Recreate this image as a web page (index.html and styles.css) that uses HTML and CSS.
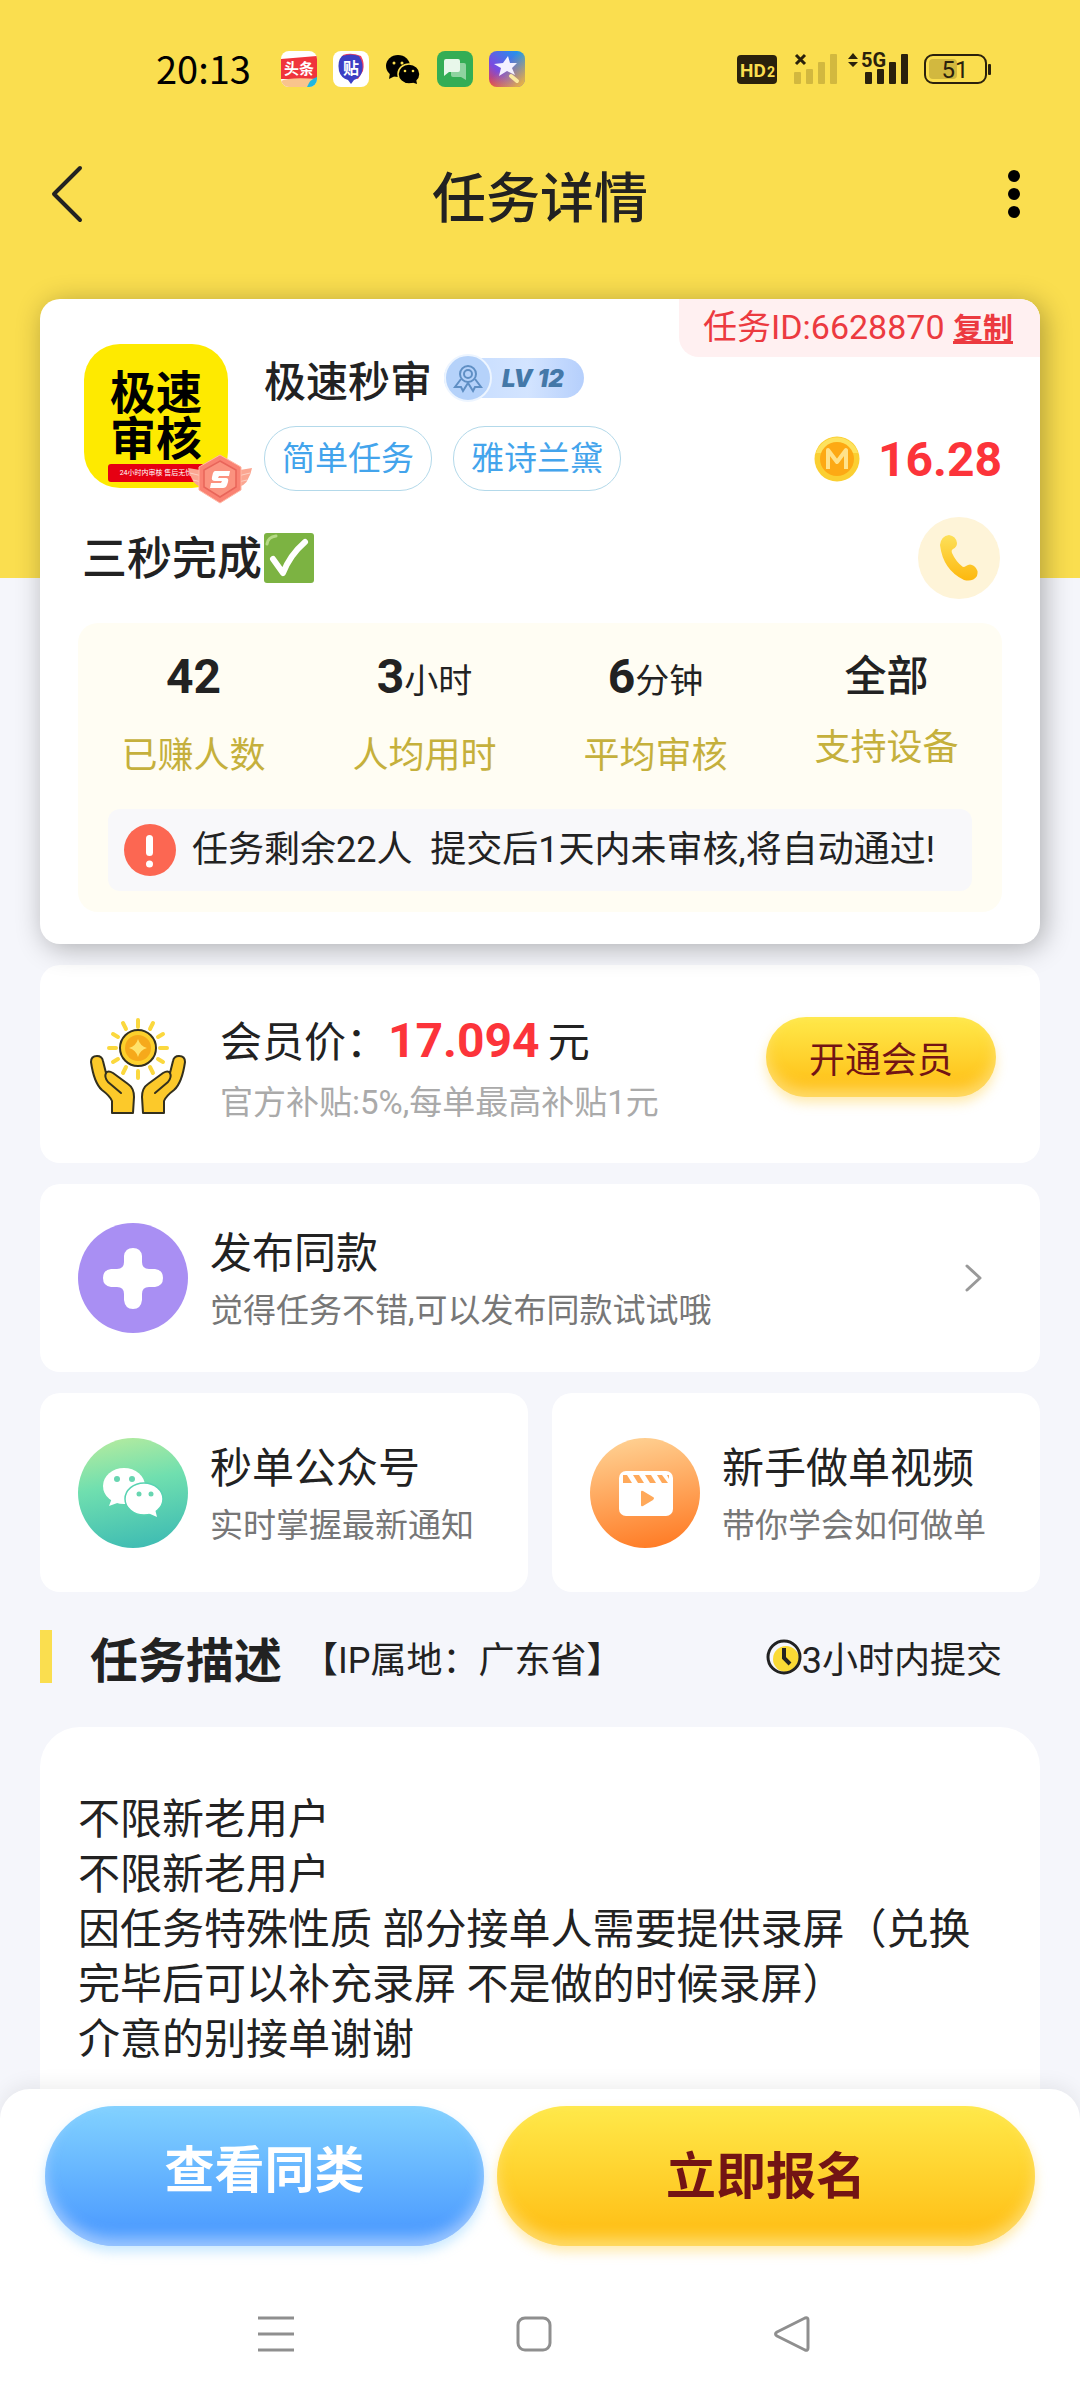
FILE: index.html
```html
<!DOCTYPE html>
<html lang="zh-CN">
<head>
    <meta charset="UTF-8">
    <meta name="viewport" content="width=device-width, initial-scale=1.0">
    <title>任务详情</title>
    <link rel="stylesheet" href="styles.css">
</head>
<body>

    <header class="header">
        <div class="status-bar">
            <span class="time">20:13</span>
            <div class="status-apps">
                <svg width="36" height="36" viewBox="0 0 36 36">
                    <defs><clipPath id="appClip"><rect width="36" height="36" rx="8"/></clipPath></defs>
                    <g clip-path="url(#appClip)">
                        <rect width="36" height="36" fill="#fff"/>
                        <path d="M0 8L36 5V28H0z" fill="#f0343c"/>
                        <path d="M0 30Q8 26 36 28V36H0z" fill="#f9c48d"/>
                        <path d="M36 26V36H26Q29 28 36 26z" fill="#1fb8e0"/>
                    </g>
                    <text x="18" y="23" class="app-text app-text-lg">头条</text>
                </svg>
                <svg width="36" height="36" viewBox="0 0 36 36">
                    <rect width="36" height="36" rx="8" fill="#fff"/>
                    <path d="M10 4Q18 1 28 5Q32 12 30 20L25 28L8 24Q4 14 10 4z" fill="#ef3e62"/>
                    <path d="M9 5Q18 2 26 5Q31 12 29 21Q27 27 21 29L18 33L15 29Q8 27 6 20Q4 10 9 5z" fill="#3c3fc4"/>
                    <text x="18" y="23" class="app-text">贴</text>
                </svg>
                <svg width="36" height="36" viewBox="0 0 36 36">
                    <ellipse cx="13" cy="15" rx="12" ry="11"/>
                    <path d="M5 22L4 28L12 24z"/>
                    <ellipse cx="24" cy="23" rx="11" ry="10" stroke="#fade4f" stroke-width="1.5"/>
                    <path d="M26 31L32 33L31 28z"/>
                    <g fill="#fade4f"><circle cx="9" cy="12" r="1.5"/><circle cx="17" cy="12" r="1.5"/><circle cx="20" cy="20" r="1.3"/><circle cx="28" cy="20" r="1.3"/></g>
                </svg>
                <svg width="36" height="36" viewBox="0 0 36 36">
                    <rect width="36" height="36" rx="8" fill="#34ad55"/>
                    <path d="M14 12H27Q29 12 29 14V29L24 26H16Q14 26 14 24z" fill="#8fd3a0"/>
                    <path d="M9 8H21Q23 8 23 10V19Q23 21 21 21H12L7 25V10Q7 8 9 8z" fill="#e8f7ea"/>
                </svg>
                <svg width="36" height="36" viewBox="0 0 36 36">
                    <defs>
                        <linearGradient id="rainbow" x1="0" y1="1" x2="1" y2="0">
                            <stop offset="0" stop-color="#f0433a"/><stop offset=".35" stop-color="#7a4be0"/><stop offset="1" stop-color="#0fa3f0"/>
                        </linearGradient>
                        <linearGradient id="rainbowEdge" x1=".4" y1=".4" x2="1" y2="1">
                            <stop offset="0" stop-color="#f5a52a" stop-opacity="0"/><stop offset="1" stop-color="#f8c232"/>
                        </linearGradient>
                    </defs>
                    <rect width="36" height="36" rx="8" fill="url(#rainbow)"/>
                    <rect width="36" height="36" rx="8" fill="url(#rainbowEdge)"/>
                    <path d="M19 5L21 12L28 12L23 17L26 24L18 20L10 25L12 17L5 13L14 12z" fill="#f4f1ff"/>
                    <path d="M22 25L28 30" stroke="#fbeaa0" stroke-width="4" stroke-linecap="round"/>
                </svg>
            </div>
            <svg class="status-signal" width="256" height="36" viewBox="0 0 256 36" fill="#2a210c">
                <rect x="1" y="4" width="40" height="29" rx="4"/>
                <text x="4" y="26" class="hd-text">HD</text>
                <text x="31" y="26" class="hd-sub">2</text>
                <path d="M60 4L69 13M69 4L60 13" stroke="#2a210c" stroke-width="3"/>
                <g fill="#d2b83f">
                    <rect x="58" y="21" width="7" height="12" rx="1"/><rect x="70" y="18" width="7" height="15" rx="1"/>
                    <rect x="82" y="11" width="7" height="22" rx="1"/><rect x="94" y="3" width="7" height="30" rx="1"/>
                </g>
                <path d="M112 8L117 2L122 8zM112 11H122L117 16z"/>
                <text x="125" y="16" class="net-text">5G</text>
                <rect x="129" y="21" width="7" height="12" rx="1"/><rect x="141" y="18" width="7" height="15" rx="1"/>
                <rect x="153" y="11" width="7" height="22" rx="1"/><rect x="165" y="3" width="7" height="30" rx="1"/>
                <rect x="189" y="4" width="61" height="28" rx="8" fill="none" stroke="#2a210c" stroke-width="2"/>
                <rect x="193" y="8" width="28" height="20" rx="4" fill="#d2b83f"/>
                <rect x="252" y="13" width="3" height="11" rx="1"/>
                <text x="219" y="27" class="battery-text">51</text>
            </svg>
        </div>
        <nav class="nav-bar">
            <button class="icon-btn" aria-label="返回">
                <svg width="34" height="58" viewBox="0 0 34 58" fill="none" stroke="#222" stroke-width="4" stroke-linecap="round" stroke-linejoin="round"><path d="M28 3L2 29L28 55"/></svg>
            </button>
            <h1>任务详情</h1>
            <button class="icon-btn icon-btn-right" aria-label="更多">
                <svg width="28" height="48" viewBox="0 0 28 48"><circle cx="14" cy="6" r="6"/><circle cx="14" cy="24" r="6"/><circle cx="14" cy="42" r="6"/></svg>
            </button>
        </nav>
    </header>

    <main class="main">

        <section class="card task-card">
            <div class="task-id">任务ID:6628870 <a href="#">复制</a></div>

            <div class="task-row">
                <div class="avatar">
                    <p class="avatar-text">极速<br>审核</p>
                    <p class="avatar-bar">24小时内审核 售后无忧</p>
                    <svg class="avatar-medal" width="64" height="50" viewBox="0 0 64 50">
                        <path d="M0 14L18 17V34Q6 32 4 25Q1 20 0 14z" fill="#fba691"/>
                        <path d="M64 14L46 17V34Q58 32 60 25Q63 20 64 14z" fill="#fba691"/>
                        <path d="M2 19L18 23M5 26L18 29M62 19L46 23M59 26L46 29" stroke="#fdd0c3"/>
                        <path d="M32 1L53 13V36L32 49L11 36V13z" fill="#fa8273" stroke="#ffb8a5"/>
                        <path d="M32 7L48 16V33L32 43L16 33V16z" fill="#fb927f" stroke="#e9655a" stroke-width="1.5"/>
                        <path d="M27 17H42L41 22H31L30 24H38Q41 24 40 28L39 31Q38 34 35 34H22L23 29H33L34 27H27Q23 27 24 23L25 19Q26 17 27 17z" fill="#fff"/>
                    </svg>
                </div>
                <div class="task-info">
                    <div class="task-name">
                        <h2>极速秒审</h2>
                        <span class="level">
                            <svg width="48" height="48" viewBox="0 0 48 48" fill="none" stroke="#5f8fc4" stroke-width="2">
                                <circle cx="24" cy="24" r="23" fill="#b5d2fa" stroke="#edf5ff"/>
                                <circle cx="24" cy="20" r="8"/><circle cx="24" cy="20" r="4"/>
                                <path d="M17 25L11 33L17 33L19 37L24 29L29 37L31 33L37 33L31 25"/>
                            </svg>
                            <span class="level-text">LV 12</span>
                        </span>
                    </div>
                    <div class="tags">
                        <span class="tag">简单任务</span>
                        <span class="tag">雅诗兰黛</span>
                    </div>
                </div>
                <div class="price">
                    <svg width="46" height="46" viewBox="0 0 46 46">
                        <circle cx="23" cy="23" r="22.500" fill="#fbcf32"/>
                        <path d="M2 17A22 22 0 0 1 44 17z" fill="#fde25e"/>
                        <circle cx="23" cy="23" r="17" fill="#fda914"/>
                        <path d="M14 33V14L23 26L32 14V33" fill="none" stroke="#ffe28a" stroke-width="4" stroke-linejoin="round"/>
                    </svg>
                    <strong>16.28</strong>
                </div>
            </div>

            <div class="title-row">
                <h3>三秒完成</h3>
                <svg class="check" width="50" height="50" viewBox="0 0 50 50">
                    <rect width="50" height="50" rx="3" fill="#7cb342"/>
                    <path d="M3 11Q4 4 12 3" fill="none" stroke="#b6da86" stroke-width="3" stroke-linecap="round"/>
                    <path d="M9 26L19 40Q26 22 41 9" fill="none" stroke="#fff" stroke-width="6" stroke-linecap="round" stroke-linejoin="round"/>
                </svg>
                <button class="phone" aria-label="联系">
                    <svg width="40" height="48" viewBox="0 0 40 48">
                        <defs><linearGradient id="phone" x1="0" y1="0" x2="0" y2="1"><stop offset="0" stop-color="#fde05a"/><stop offset="1" stop-color="#fdb80e"/></linearGradient></defs>
                        <path d="M10 1Q17 2 18 9Q18 13 14 15Q12 16 13 19Q17 28 24 33Q26 33 27 32Q31 29 35 32Q40 36 38 42Q34 48 25 46Q4 36 1 11Q2 2 10 1z" fill="url(#phone)"/>
                    </svg>
                </button>
            </div>

            <div class="stats">
                <dl class="stats-grid">
                    <div class="stat"><dd><b>42</b></dd><dt>已赚人数</dt></div>
                    <div class="stat"><dd><b>3</b>小时</dd><dt>人均用时</dt></div>
                    <div class="stat"><dd><b>6</b>分钟</dd><dt>平均审核</dt></div>
                    <div class="stat stat-text"><dd>全部</dd><dt>支持设备</dt></div>
                </dl>
                <div class="notice">
                    <svg width="52" height="52" viewBox="0 0 52 52"><circle cx="26" cy="26" r="26" fill="#fc6752"/><rect x="22" y="11" width="7" height="21" rx="3.500" fill="#fff"/><circle cx="25.500" cy="40" r="3.500" fill="#fff"/></svg>
                    <span>任务剩余22人&nbsp; 提交后1天内未审核,将自动通过!</span>
                </div>
            </div>
        </section>

        <section class="card member-card">
            <svg class="hands" width="96" height="98" viewBox="0 0 96 98">
                <g stroke="#fbd83e" stroke-width="4" stroke-linecap="round">
                    <path d="M48 3V10M48 54V61M19 31H26M70 31H77M33 6L36 12M63 6L60 12M60 50L63 56M36 50L33 56M23 17L28 20M73 17L68 20M23 45L28 42M73 45L68 42"/>
                </g>
                <circle cx="48" cy="31" r="18" fill="#fdd02c" stroke="#33301e" stroke-width="2"/>
                <circle cx="48" cy="31" r="13" fill="#f6a91b"/>
                <path d="M48 22Q50 29 57 31Q50 33 48 40Q46 33 39 31Q46 29 48 22z" fill="#ffe26b"/>
                <g fill="#fcc92a" stroke="#33301e" stroke-width="2" stroke-linejoin="round" stroke-linecap="round">
                    <path d="M1 45Q1 39 7 39Q12 39 13 44L16 56Q18 53 23 56L38 67Q44 71 44 80L43 96H22V84Q20 79 12 73Q4 66 1 45z"/>
                    <path d="M16 56Q14 60 18 65L31 76" fill="none"/>
                    <path d="M95 45Q95 39 89 39Q84 39 83 44L80 56Q78 53 73 56L58 67Q52 71 52 80L53 96H74V84Q76 79 84 73Q92 66 95 45z"/>
                    <path d="M80 56Q82 60 78 65L65 76" fill="none"/>
                </g>
            </svg>
            <div class="card-text">
                <h4>会员价：<strong>17.094</strong>元</h4>
                <p class="muted">官方补贴:5%,每单最高补贴1元</p>
            </div>
            <button class="pill pill-yellow pill-small">开通会员</button>
        </section>

        <a href="#" class="card link-card publish-card">
            <svg width="110" height="110" viewBox="0 0 110 110"><circle cx="55" cy="55" r="55" fill="#a98ff3"/><path d="M46 33Q47 25 55 25Q63 25 64 33V39Q64 46 71 46H77Q85 47 85 55Q85 63 77 64H71Q64 64 64 71V77Q63 86 55 86Q47 86 46 77V71Q46 64 39 64H33Q25 63 25 55Q25 47 33 46H39Q46 46 46 39z" fill="#fff"/></svg>
            <div class="card-text">
                <h4>发布同款</h4>
                <p>觉得任务不错,可以发布同款试试哦</p>
            </div>
            <svg class="chevron" width="18" height="28" viewBox="0 0 18 28" fill="none" stroke="#999" stroke-width="3" stroke-linecap="round" stroke-linejoin="round"><path d="M3 2L16 14L3 26"/></svg>
        </a>

        <div class="card-pair">
            <a href="#" class="card link-card">
                <svg width="110" height="110" viewBox="0 0 110 110">
                    <defs><linearGradient id="green" x1=".4" y1="0" x2=".6" y2="1"><stop offset="0" stop-color="#afeaa0"/><stop offset=".4" stop-color="#70dfaf"/><stop offset="1" stop-color="#3fbcb3"/></linearGradient></defs>
                    <circle cx="55" cy="55" r="55" fill="url(#green)"/>
                    <g fill="#fff">
                        <ellipse cx="46" cy="48" rx="21" ry="18"/><path d="M34 60L31 68L42 64z"/>
                        <ellipse cx="66" cy="61" rx="19" ry="16" stroke="#58d3b2" stroke-width="1.500"/><path d="M70 75L79 79L77 71z"/>
                    </g>
                    <g fill="#67d5b0"><circle cx="39" cy="41" r="3"/><circle cx="54" cy="41" r="3"/><circle cx="61" cy="56" r="2.500"/><circle cx="73" cy="56" r="2.500"/></g>
                </svg>
                <div class="card-text">
                    <h4>秒单公众号</h4>
                    <p>实时掌握最新通知</p>
                </div>
            </a>
            <a href="#" class="card link-card">
                <svg width="110" height="110" viewBox="0 0 110 110">
                    <defs><linearGradient id="orange" x1=".4" y1="0" x2=".6" y2="1"><stop offset="0" stop-color="#ffcf90"/><stop offset="1" stop-color="#ff7c26"/></linearGradient></defs>
                    <circle cx="55" cy="55" r="55" fill="url(#orange)"/>
                    <rect x="29" y="33" width="54" height="45" rx="7" fill="#fff"/>
                    <g fill="#ffa95a"><path d="M33 37L37 37L42 45H33V41zM43 37H49L54 45H48zM55 37H61L66 45H60zM67 37H72L78 45H72zM77 37H79V41z"/><path d="M51 54Q51 52 53 53L63 59Q65 60 63 62L53 68Q51 69 51 67z"/></g>
                </svg>
                <div class="card-text">
                    <h4>新手做单视频</h4>
                    <p>带你学会如何做单</p>
                </div>
            </a>
        </div>

        <div class="section-head">
            <h2>任务描述</h2>
            <span class="region">【IP属地：广东省】</span>
            <span class="deadline">
                <svg width="36" height="36" viewBox="0 0 36 36" fill="none"><circle cx="20" cy="20" r="13" fill="#fada35"/><circle cx="18" cy="18" r="16" stroke="#222" stroke-width="3"/><path d="M18 9V19L24 25" stroke="#222" stroke-width="4"/></svg>
                3小时内提交
            </span>
        </div>

        <article class="card description">
            <p>不限新老用户<br>不限新老用户<br>因任务特殊性质 部分接单人需要提供录屏（兑换完毕后可以补充录屏 不是做的时候录屏）<br>介意的别接单谢谢</p>
        </article>
    </main>

    <footer class="footer">
        <div class="actions">
            <button class="pill pill-blue">查看同类</button>
            <button class="pill pill-yellow pill-wide">立即报名</button>
        </div>
        <div class="system-nav">
            <svg width="36" height="36" viewBox="0 0 36 36" stroke="#8f8f8f" stroke-width="3"><path d="M0 2H36M0 18H36M0 34H36"/></svg>
            <svg width="36" height="36" viewBox="0 0 36 36" fill="none" stroke="#8f8f8f" stroke-width="3"><rect x="2" y="2" width="32" height="32" rx="7"/></svg>
            <svg width="36" height="36" viewBox="0 0 36 36" fill="none" stroke="#8f8f8f" stroke-width="3" stroke-linejoin="round"><path d="M31 2Q34 1 34 4V32Q34 35 31 34L3 20Q0 18 3 16z"/></svg>
        </div>
    </footer>

</body>
</html>
```
FILE: styles.css
```css
* {
    box-sizing: border-box;
    margin: 0;
    padding: 0;
}

body {
    display: flex;
    flex-direction: column;
    min-height: 100vh;
    background: #f5f6fb;
    color: #222;
    font-family: Roboto, "Noto Sans CJK SC", sans-serif;
}

button {
    border: none;
    background: none;
    font-family: inherit;
    cursor: pointer;
}

a {
    color: inherit;
    text-decoration: none;
}

svg {
    display: block;
    flex: none;
    overflow: visible;
}

.header {
    background: #fade4f;
    padding-bottom: 328px;
}

.status-bar {
    display: flex;
    align-items: center;
    height: 138px;
    padding: 0 88px 0 156px;
    color: #000;
}

.time {
    padding-bottom: 4px;
    font-size: 38px;
    font-family: "Noto Sans CJK SC", sans-serif;
}

.status-apps {
    display: flex;
    gap: 16px;
    margin-left: 30px;
}

.status-signal {
    margin-left: auto;
}

.app-text {
    fill: #fff;
    font-size: 16px;
    font-weight: 700;
    text-anchor: middle;
}

.app-text-lg {
    font-size: 15px;
}

.hd-text {
    fill: #fade4f;
    font-size: 19px;
    font-weight: 700;
}

.hd-sub {
    fill: #fade4f;
    font-size: 14px;
    font-weight: 700;
}

.net-text {
    font-size: 20px;
    font-weight: 700;
}

.battery-text {
    font-size: 24px;
    text-anchor: middle;
}

.nav-bar {
    display: grid;
    grid-template-columns: 1fr auto 1fr;
    align-items: center;
    height: 112px;
    padding: 0 52px;
}

.nav-bar h1 {
    font-size: 54px;
    font-weight: 500;
}

.icon-btn {
    justify-self: start;
}

.icon-btn-right {
    justify-self: end;
}

.main {
    display: flex;
    flex-direction: column;
    flex: 1;
    gap: 21px;
    margin-top: -279px;
    padding: 0 40px;
}

.card {
    background: #fff;
    border-radius: 20px;
}

.task-card {
    position: relative;
    padding: 45px 38px 32px;
    box-shadow: 4px 4px 28px rgba(0, 0, 0, 0.3);
}

.task-id {
    position: absolute;
    top: 0;
    right: 0;
    padding: 0 27px 0 24px;
    border-radius: 0 20px 0 20px;
    background: #fff0f1;
    color: #ec3a40;
    font-size: 34px;
    line-height: 56px;
}

.task-id a {
    font-size: 30px;
    font-weight: 700;
    text-decoration: underline;
}

.task-row {
    display: flex;
    padding: 0 0 0 6px;
}

.avatar {
    position: relative;
    width: 144px;
    height: 144px;
    padding: 26px 24px 0;
    border-radius: 36px;
    background: #feea00;
    color: #000;
}

.avatar-text {
    font-size: 46px;
    font-weight: 700;
    line-height: 46px;
    text-align: center;
    white-space: nowrap;
}

.avatar-bar {
    margin-top: 2px;
    border-radius: 3px;
    background: #e60012;
    color: #fff;
    font-size: 7px;
    line-height: 18px;
    text-align: center;
    white-space: nowrap;
}

.avatar-medal {
    position: absolute;
    right: -24px;
    bottom: -16px;
}

.task-info {
    margin-left: 36px;
    padding-top: 10px;
}

.task-name {
    display: flex;
    align-items: center;
    gap: 12px;
    height: 48px;
    margin-bottom: 24px;
}

.task-name h2 {
    font-size: 42px;
    font-weight: 500;
}

.level {
    display: flex;
    align-items: center;
    height: 40px;
    padding-right: 20px;
    border-radius: 20px;
    background: linear-gradient(90deg, #c3dbff, #d3e4ff 60%, #b5cffc);
}

.level-text {
    margin-left: 10px;
    color: #4478a8;
    font-family: Inter, sans-serif;
    font-size: 24px;
    font-style: italic;
    font-weight: 900;
}

.tags {
    display: flex;
    gap: 21px;
}

.tag {
    height: 65px;
    padding: 0 17px;
    border: 1px solid #b3d9ea;
    border-radius: 32px;
    color: #43a4ec;
    font-size: 33px;
    line-height: 63px;
}

.price {
    display: flex;
    align-items: center;
    align-self: flex-end;
    gap: 18px;
    height: 64px;
    margin-left: auto;
    color: #fc343a;
    font-size: 48px;
}

.title-row {
    display: flex;
    align-items: center;
    margin-top: 26px;
    padding: 0 2px 0 4px;
}

.title-row h3 {
    padding-top: 4px;
    font-size: 45px;
    font-weight: 500;
    line-height: 66px;
}

.check {
    margin-left: 2px;
}

.phone {
    display: flex;
    align-items: center;
    justify-content: center;
    width: 82px;
    height: 82px;
    margin-left: auto;
    border-radius: 50%;
    background: #fef4d8;
}

.stats {
    margin-top: 24px;
    padding: 27px 0 21px;
    border-radius: 20px;
    background: #fffdf3;
}

.stats-grid {
    display: grid;
    grid-template-columns: repeat(4, 1fr);
    text-align: center;
}

.stat dd {
    font-size: 34px;
    line-height: 62px;
}

.stat dd b {
    font-size: 48px;
    line-height: 48px;
}

.stat dt {
    margin-top: 22px;
    color: #c5b03c;
    font-size: 36px;
    line-height: 44px;
}

.stat-text dd {
    font-size: 42px;
    font-weight: 500;
    line-height: 54px;
}

.notice {
    display: flex;
    align-items: center;
    gap: 16px;
    margin: 31px 30px 0;
    padding: 15px 16px;
    border-radius: 12px;
    background: #f8f8fa;
    font-size: 36px;
    line-height: 52px;
    white-space: nowrap;
}

.card-text {
    display: flex;
    flex-direction: column;
    gap: 12px;
    flex: 1;
}

.card-text h4 {
    font-size: 42px;
    font-weight: 400;
    line-height: 52px;
    white-space: nowrap;
}

.card-text p {
    color: #777;
    font-size: 33px;
    line-height: 44px;
    white-space: nowrap;
}

.card-text .muted {
    color: #aaa;
}

.card-text strong {
    margin-right: 8px;
    color: #fc343a;
    font-size: 48px;
    line-height: 48px;
}

.member-card {
    display: flex;
    align-items: flex-start;
    gap: 34px;
    padding: 52px 44px 38px 50px;
}

.pill {
    flex: 439;
    height: 140px;
    padding-bottom: 8px;
    border-radius: 70px;
    font-size: 50px;
    font-weight: 700;
}

.pill-wide {
    flex: 538;
}

.pill-yellow {
    background: linear-gradient(#ffe94a, #ffc21a 85%);
    box-shadow: 0 6px 12px rgba(255, 205, 60, 0.4), inset 0 -8px 14px rgba(255, 230, 140, 0.7);
    color: #731414;
}

.pill-blue {
    padding-bottom: 20px;
    background: linear-gradient(#82d2ff, #509fff 85%);
    box-shadow: 0 6px 12px rgba(120, 200, 255, 0.4), inset 0 -8px 14px rgba(190, 215, 255, 0.7);
    color: #fff;
}

.pill-small {
    flex: none;
    width: 230px;
    height: 80px;
    padding-bottom: 0;
    font-size: 36px;
    font-weight: 400;
}

.link-card {
    display: flex;
    align-items: center;
    gap: 22px;
    padding: 45px 38px 44px;
}

.link-card .card-text {
    gap: 9px;
    padding-top: 5px;
}

.publish-card {
    padding: 39px 58px 39px 38px;
}

.card-pair {
    display: grid;
    grid-template-columns: 1fr 1fr;
    gap: 24px;
}

.section-head {
    display: flex;
    align-items: center;
    height: 53px;
    margin: 17px 0 23px;
    padding: 0 38px;
    border-left: 12px solid #fade4f;
    font-size: 36px;
}

.section-head h2 {
    font-size: 48px;
    font-weight: 700;
}

.region {
    margin-left: 20px;
}

.deadline {
    display: flex;
    align-items: center;
    margin-left: auto;
}

.description {
    flex: 1;
    padding: 65px 38px 40px;
    border-radius: 40px 40px 0 0;
    font-size: 42px;
    line-height: 55px;
}

.footer {
    position: sticky;
    bottom: 0;
    margin-top: -30px;
    padding-top: 17px;
    border-radius: 30px 30px 0 0;
    background: #fff;
    box-shadow: 0 -4px 20px rgba(0, 0, 0, 0.07);
}

.actions {
    display: flex;
    gap: 13px;
    padding: 0 45px;
}

.system-nav {
    display: flex;
    justify-content: center;
    gap: 222px;
    padding: 70px 12px 48px 0;
}
```
